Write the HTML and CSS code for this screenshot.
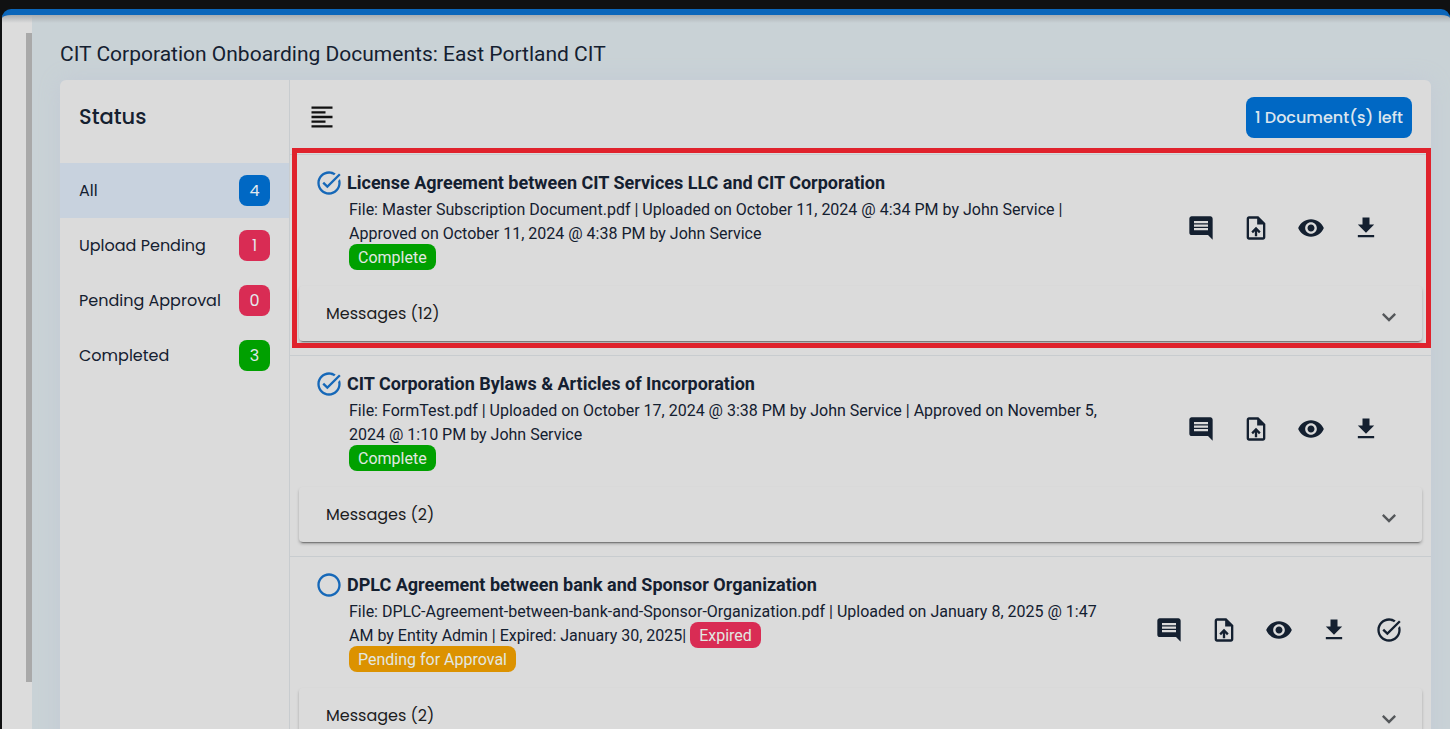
FILE: index.html
```html
<!DOCTYPE html>
<html lang="en">
<head>
<meta charset="utf-8">
<title>CIT Corporation Onboarding Documents</title>
<link rel="stylesheet" href="styles.css">
</head>
<body>
<svg class="sprite" aria-hidden="true">
  <symbol id="i-task" viewBox="0 0 24 24"><path d="M22 5.18 10.59 16.6l-4.24-4.24 1.41-1.41 2.83 2.83 10-10L22 5.18zM19.79 10.22c.13.57.21 1.17.21 1.78 0 4.42-3.58 8-8 8s-8-3.58-8-8 3.58-8 8-8c1.58 0 3.04.46 4.28 1.25l1.44-1.44A9.9 9.9 0 0 0 12 2C6.48 2 2 6.48 2 12s4.48 10 10 10 10-4.48 10-10c0-1.19-.22-2.33-.6-3.39l-1.61 1.61z"/></symbol>
  <symbol id="i-ring" viewBox="0 0 24 24"><path d="M12 2C6.48 2 2 6.48 2 12s4.48 10 10 10 10-4.48 10-10S17.52 2 12 2zm0 18c-4.42 0-8-3.58-8-8s3.58-8 8-8 8 3.58 8 8-3.58 8-8 8z"/></symbol>
  <symbol id="i-chat" viewBox="0 0 24 24"><path d="M21.99 4c0-1.1-.89-2-1.99-2H4c-1.100 0-2 .9-2 2v12c0 1.100.9 2 2 2h14l4 4-.01-18zM18 14H6v-2h12v2zm0-3H6V9h12v2zm0-3H6V6h12v2z"/></symbol>
  <symbol id="i-upload" viewBox="0 0 24 24"><path d="M14 2H6c-1.100 0-1.990.9-1.990 2L4 20c0 1.100.89 2 1.990 2H18c1.100 0 2-.9 2-2V8l-6-6zm4 18H6V4h7v5h5v11zM8 15.010l1.410 1.410L11 14.840V19h2v-4.160l1.590 1.590L16 15.010 12.010 11 8 15.010z"/></symbol>
  <symbol id="i-eye" viewBox="0 0 24 24"><path d="M12 4.500C7 4.500 2.730 7.610 1 12c1.730 4.390 6 7.500 11 7.500s9.270-3.110 11-7.500c-1.730-4.390-6-7.500-11-7.500zM12 17c-2.760 0-5-2.240-5-5s2.240-5 5-5 5 2.240 5 5-2.240 5-5 5zm0-8c-1.660 0-3 1.340-3 3s1.340 3 3 3 3-1.340 3-3-1.340-3-3-3z"/></symbol>
  <symbol id="i-download" viewBox="0 0 24 24"><path d="M19 9h-4V3H9v6H5l7 7 7-7zM5 18v2h14v-2H5z"/></symbol>
  <symbol id="i-chevron" viewBox="0 0 24 24"><path d="M16.590 8.590 12 13.170 7.410 8.590 6 10l6 6 6-6z"/></symbol>
  <symbol id="i-lines" viewBox="0 0 24 24"><path d="M15 15H3v2h12v-2zm0-8H3v2h12V7zM3 13h18v-2H3v2zm0 8h18v-2H3v2zM3 3v2h18V3H3z"/></symbol>
</svg>
<div class="app">
  <div class="rail"><div class="thumb"></div></div>
  <main class="main">
    <h1 class="page-title">CIT Corporation Onboarding Documents: East Portland CIT</h1>
    <div class="card">
      <nav class="status">
        <h2 class="status-title">Status</h2>
        <a class="filter filter-active" href="#all">All <span class="count blue">4</span></a>
        <a class="filter" href="#upload">Upload Pending <span class="count red">1</span></a>
        <a class="filter" href="#approval">Pending Approval <span class="count red">0</span></a>
        <a class="filter" href="#completed">Completed <span class="count green">3</span></a>
      </nav>
      <section class="documents">
        <div class="toolbar">
          <button class="icon-button menu" aria-label="Toggle status list"><svg><use href="#i-lines"/></svg></button>
          <button class="left-button">1 Document(s) left</button>
        </div>
        <article class="document highlighted">
          <div class="summary">
            <svg class="state"><use href="#i-task"/></svg>
            <div class="info">
              <h3 class="name">License Agreement between CIT Services LLC and CIT Corporation</h3>
              <p class="meta">File: Master Subscription Document.pdf | Uploaded on October 11, 2024 @ 4:34 PM by John Service | Approved on October 11, 2024 @ 4:38 PM by John Service</p>
              <div class="tag-row"><span class="tag green">Complete</span></div>
            </div>
            <div class="actions">
              <button class="icon-button" aria-label="Comments"><svg><use href="#i-chat"/></svg></button>
              <button class="icon-button" aria-label="Upload"><svg><use href="#i-upload"/></svg></button>
              <button class="icon-button" aria-label="View"><svg><use href="#i-eye"/></svg></button>
              <button class="icon-button" aria-label="Download"><svg><use href="#i-download"/></svg></button>
            </div>
          </div>
          <button class="messages" aria-expanded="false">Messages (12)<svg><use href="#i-chevron"/></svg></button>
        </article>
        <article class="document">
          <div class="summary">
            <svg class="state"><use href="#i-task"/></svg>
            <div class="info">
              <h3 class="name">CIT Corporation Bylaws &amp; Articles of Incorporation</h3>
              <p class="meta">File: FormTest.pdf | Uploaded on October 17, 2024 @ 3:38 PM by John Service | Approved on November 5, 2024 @ 1:10 PM by John Service</p>
              <div class="tag-row"><span class="tag green">Complete</span></div>
            </div>
            <div class="actions">
              <button class="icon-button" aria-label="Comments"><svg><use href="#i-chat"/></svg></button>
              <button class="icon-button" aria-label="Upload"><svg><use href="#i-upload"/></svg></button>
              <button class="icon-button" aria-label="View"><svg><use href="#i-eye"/></svg></button>
              <button class="icon-button" aria-label="Download"><svg><use href="#i-download"/></svg></button>
            </div>
          </div>
          <button class="messages" aria-expanded="false">Messages (2)<svg><use href="#i-chevron"/></svg></button>
        </article>
        <article class="document">
          <div class="summary">
            <svg class="state"><use href="#i-ring"/></svg>
            <div class="info">
              <h3 class="name">DPLC Agreement between bank and Sponsor Organization</h3>
              <p class="meta">File: DPLC-Agreement-between-bank-and-Sponsor-Organization.pdf | Uploaded on January 8, 2025 @ 1:47 AM by Entity Admin | Expired: January 30, 2025| <span class="tag red">Expired</span></p>
              <div class="tag-row"><span class="tag orange">Pending for Approval</span></div>
            </div>
            <div class="actions actions-wide">
              <button class="icon-button" aria-label="Comments"><svg><use href="#i-chat"/></svg></button>
              <button class="icon-button" aria-label="Upload"><svg><use href="#i-upload"/></svg></button>
              <button class="icon-button" aria-label="View"><svg><use href="#i-eye"/></svg></button>
              <button class="icon-button" aria-label="Download"><svg><use href="#i-download"/></svg></button>
              <button class="icon-button" aria-label="Approve"><svg><use href="#i-task"/></svg></button>
            </div>
          </div>
          <button class="messages" aria-expanded="false">Messages (2)<svg><use href="#i-chevron"/></svg></button>
        </article>
      </section>
    </div>
  </main>
</div>
</body>
</html>
```
FILE: styles.css
```css
* { box-sizing: border-box; }

body {
  margin: 0;
  height: 100vh;
  overflow: hidden;
  padding: 9px 0 0 2px;
  background: #101112;
  color: #142030;
  font-family: Roboto, sans-serif;
}

h1, h2, h3, p { margin: 0; }

button {
  border: 0;
  padding: 0;
  background: none;
  color: inherit;
  font: inherit;
  cursor: pointer;
}

svg { display: block; fill: currentColor; }
.sprite { display: none; }

.app {
  display: flex;
  height: 100%;
  overflow: hidden;
  border-top: 6px solid #0b66ba;
  border-radius: 9px 9px 0 0;
  background:
    linear-gradient(#a9adb0, rgba(200, 209, 213, 0)) top / 100% 8px no-repeat,
    linear-gradient(90deg, #dcdcdc 30px, #c9d2d6 30px);
}

.rail {
  display: flex;
  flex: none;
  justify-content: flex-end;
  width: 30px;
  padding: 18px 0 47px;
}

.thumb { width: 6px; background: #a9a9a9; }

.main {
  flex: 1;
  min-width: 0;
  padding: 24px 19px 0 28px;
}

.page-title {
  margin-bottom: 11px;
  font-size: 21px;
  line-height: 30px;
  font-weight: 400;
}

.card {
  display: flex;
  min-height: 100%;
  border-radius: 6px;
  background: #dbdbdb;
  box-shadow: 0 0 22px #c3cad5;
}

.status {
  flex: none;
  width: 230px;
  border-right: 1px solid #c8cccf;
  font-family: Poppins, Inter, sans-serif;
}

.status-title {
  padding: 22px 19px 31px;
  font-size: 21px;
  line-height: 30px;
  font-weight: 500;
}

.filter {
  display: flex;
  align-items: center;
  justify-content: space-between;
  height: 55px;
  padding: 0 19px;
  color: inherit;
  font-size: 16px;
  text-decoration: none;
}

.filter-active { background: #c8d2de; }

.count {
  width: 31px;
  border-radius: 8px;
  color: #e3e9ee;
  line-height: 31px;
  text-align: center;
}

.blue { background: #0068c4; }
.red { background: #d92c54; }
.green { background: #00a000; }
.orange { background: #dc9200; }

.documents { flex: 1; min-width: 0; }

.toolbar {
  display: flex;
  align-items: center;
  justify-content: space-between;
  height: 74px;
  padding: 0 19px 0 18px;
}

.icon-button svg { width: 28px; height: 28px; }

.menu { color: #111; }

.left-button {
  padding: 0 9px;
  border-radius: 8px;
  background: #0068c4;
  color: #dbe5ee;
  font-family: Poppins, Inter, sans-serif;
  font-size: 16px;
  font-weight: 500;
  line-height: 41px;
}

.document {
  position: relative;
  padding: 15px 9px 14px;
  border-top: 1px solid #c8cccf;
}

/* Callout frame laid over the first document */
.highlighted::after {
  content: "";
  position: absolute;
  inset: -7px 0 7px 2px;
  border: 5px solid #e0222c;
  pointer-events: none;
}

.summary { display: flex; }

.state {
  flex: none;
  width: 28px;
  height: 28px;
  margin: -1px 0 0 16px;
  color: #1668b8;
}

.info { flex: 1; min-width: 0; padding-left: 6px; }

.name {
  margin: 0 0 2px -2px;
  font-size: 18px;
  line-height: 26px;
  font-weight: 700;
}

.meta,
.tag-row { font-size: 16px; line-height: 24px; }

.tag {
  padding: 4px 9px 3px;
  border-radius: 8px;
  color: #e2e8e2;
}

.actions {
  display: flex;
  flex: none;
  align-items: center;
  justify-content: flex-end;
  gap: 27px;
  width: 305px;
  padding: 16px 42px 0 0;
}

.actions-wide { padding-right: 19px; }

.messages {
  display: flex;
  align-items: center;
  justify-content: space-between;
  width: 100%;
  height: 55px;
  margin-top: 16px;
  padding: 0 19px 0 27px;
  border-radius: 4px;
  color: #1b1c1e;
  font-family: Poppins, Inter, sans-serif;
  font-size: 16px;
  box-shadow: 0 3px 1px -2px rgba(0, 0, 0, .3), 0 2px 3px rgba(0, 0, 0, .25);
}

.messages svg { width: 28px; height: 28px; margin-top: 6px; color: #54575a; }
```
